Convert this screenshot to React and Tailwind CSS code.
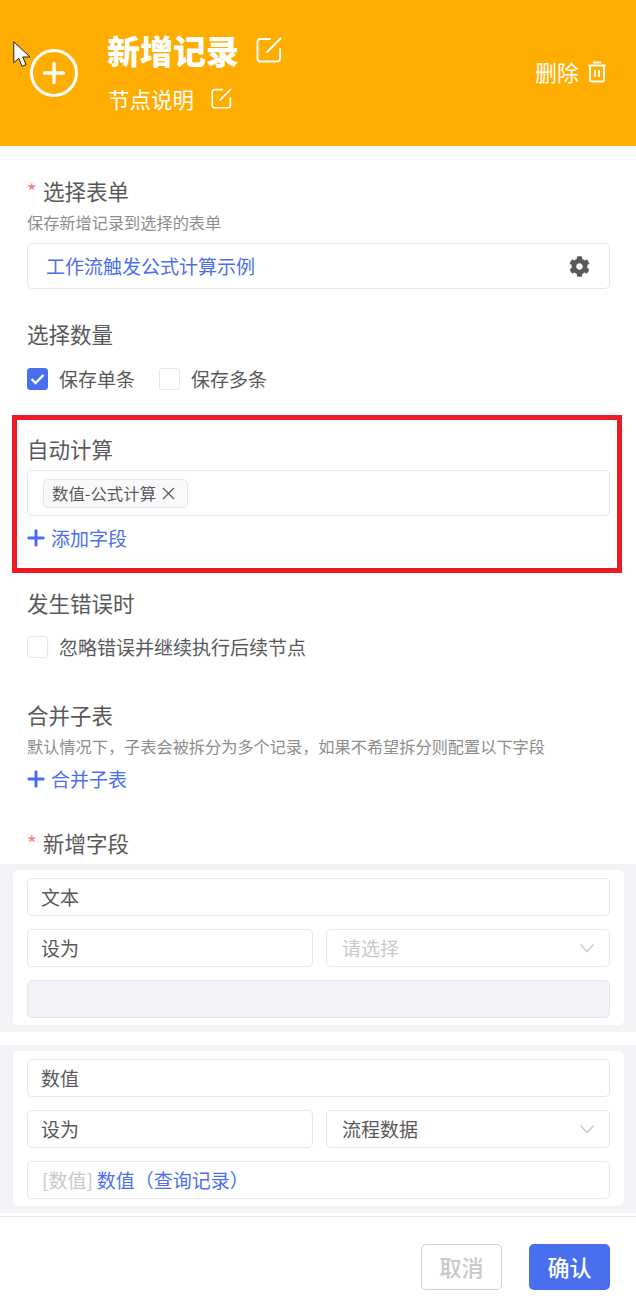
import { FaCog } from "react-icons/fa";

const cjk = { fontFamily: '"Noto Sans CJK SC", "Liberation Sans", sans-serif' };

function EditIcon({ size }) {
  return (
    <svg width={size} height={size} viewBox="0 0 26 26" fill="none" stroke="#fff" strokeWidth="2" strokeLinecap="round">
      <path d="M14 2H4.500A3 3 0 0 0 1.500 5v16.500a3 3 0 0 0 3 3H21a3 3 0 0 0 3-3V12" />
      <path d="M11 15 24.500 1.500" />
    </svg>
  );
}

function PlusIcon() {
  return (
    <svg width="18" height="18" viewBox="0 0 18 18" fill="#4a6fee">
      <rect x="0.500" y="7.500" width="17" height="3" rx="1" />
      <rect x="7.500" y="0.500" width="3" height="17" rx="1" />
    </svg>
  );
}

function Check({ on }) {
  return (
    <span className={`flex h-[22px] w-[21px] shrink-0 items-center justify-center rounded-[3px] border ${on ? "border-[#4a6fee] bg-[#4a6fee]" : "border-[#e4e6ec] bg-white"}`}>
      {on && (
        <svg width="15" height="12" viewBox="0 0 15 12" fill="none" stroke="#fff" strokeWidth="2.400">
          <path d="M1.500 6 5.500 10 13.500 2" />
        </svg>
      )}
    </span>
  );
}

function Chevron() {
  return (
    <svg width="16" height="10" viewBox="0 0 16 10" fill="none" stroke="#c4c6cc" strokeWidth="1.200">
      <path d="M1.500 1.500 8 8.500l6.500-7" />
    </svg>
  );
}

function Box({ className = "", children }) {
  return (
    <div className={`flex h-[38px] items-center rounded-[5px] border border-[#e4e6ec] text-[19px] text-[#595959] ${className}`}>
      {children}
    </div>
  );
}

function FieldCard({ name, select, placeholder, children, disabled }) {
  return (
    <div className="bg-[#f2f3f7] pt-[6px] pr-[12px] pb-[7px] pl-[13px]">
      <div className="flex flex-col gap-[13px] rounded-[5px] bg-white px-[14px] pt-[8px] pb-[7px]">
        <Box className="px-[13px]">{name}</Box>
        <div className="flex gap-[13px]">
          <Box className="w-[286px] px-[13px]">设为</Box>
          <Box className="flex-1 justify-between pr-[14px] pl-[15px]">
            <span className={placeholder ? "text-[#c8c8c8]" : ""}>{select}</span>
            <Chevron />
          </Box>
        </div>
        <Box className={disabled ? "bg-[#f2f3f7]" : "px-[14px]"}>{children}</Box>
      </div>
    </div>
  );
}

export default function App() {
  return (
    <div className="relative flex h-[1316px] w-[636px] flex-col overflow-hidden bg-white" style={cjk}>
      {/* Header */}
      <div className="flex h-[146px] shrink-0 items-center bg-[#ffad00] pr-[30px] pl-[30px] text-white">
        <svg width="48" height="48" viewBox="0 0 48 48" fill="none" stroke="#fff" className="shrink-0">
          <circle cx="24" cy="24" r="22.500" strokeWidth="3" />
          <path d="M14.500 24h19M24 14.500v19" strokeWidth="3.400" strokeLinecap="round" />
        </svg>
        <div className="mb-[7px] ml-[29px] flex flex-1 flex-col">
          <div className="flex h-[48px] items-center gap-[17px]">
            <span className="text-[33px] leading-[48px] font-black">新增记录</span>
            <EditIcon size={26} />
          </div>
          <div className="mt-[10px] flex h-[30px] items-center gap-[17px]">
            <span className="pl-px text-[21.500px] leading-[30px]">节点说明</span>
            <EditIcon size={21} />
          </div>
        </div>
        <div className="mb-[3px] flex items-center gap-[9px] text-[22px]">
          <span>删除</span>
          <svg width="18" height="22" viewBox="0 0 18 22" fill="none" stroke="#fff" strokeWidth="1.800">
            <path d="M5 1.500h8M.5 4.500h17" />
            <path d="M2 4.500v14.500a1.500 1.500 0 0 0 1.500 1.500h11a1.500 1.500 0 0 0 1.500-1.500V4.500" />
            <path d="M7 9v7M11 9v7" />
          </svg>
        </div>
      </div>

      {/* Form */}
      <div className="flex-1 text-[#595959]">
        <div className="pt-[30px] pr-[26px] pl-[27px]">
          <div className="flex h-[30px] items-center text-[21.500px] leading-[30px]">
            <span className="mr-[6px] w-[10px] text-[21px] text-[#ff7875]">*</span>选择表单
          </div>
          <p className="mt-[6px] text-[16.200px] leading-[20px] text-[#8c8c8c]">保存新增记录到选择的表单</p>
          <div className="mt-[11px] flex h-[46px] items-center justify-between rounded-[5px] border border-[#e4e6ec] pr-[19px] pl-[18px] text-[19px] text-[#4a6fee]">
            工作流触发公式计算示例
            <FaCog className="text-[#595959]" size={21} />
          </div>
          <div className="mt-[30px] text-[21.500px] leading-[30px]">选择数量</div>
          <div className="mt-[19px] flex items-center text-[19px] leading-[22px]">
            <Check on />
            <span className="ml-[11px]">保存单条</span>
            <span className="ml-[24px]"><Check /></span>
            <span className="ml-[11px]">保存多条</span>
          </div>
        </div>

        {/* Highlighted section */}
        <div className="mt-[25px] mr-[14px] ml-[12px] h-[158px] border-[5px] border-[#ed1c24] pt-[14px] pr-[7px] pl-[10px]">
          <div className="text-[21.500px] leading-[30px]">自动计算</div>
          <div className="mt-[6px] flex h-[46px] items-center rounded-[5px] border border-[#e4e6ec] pl-[15px]">
            <span className="flex h-[29px] w-[145px] items-center gap-[6px] rounded-[5px] border border-[#e4e6ec] bg-[#f9f9fb] pl-[8px] text-[16.400px]">
              数值-公式计算
              <svg width="13" height="13" viewBox="0 0 13 13" stroke="#595959" strokeWidth="1.200">
                <path d="M1 1 12 12M12 1 1 12" />
              </svg>
            </span>
          </div>
          <div className="mt-[9px] flex items-center gap-[6px] text-[19px] leading-[26px] text-[#4a6fee]">
            <PlusIcon />添加字段
          </div>
        </div>

        <div className="pr-[26px] pl-[27px]">
          <div className="mt-[15px] text-[21.500px] leading-[30px]">发生错误时</div>
          <div className="mt-[18px] flex items-center text-[19px] leading-[22px]">
            <Check />
            <span className="ml-[11px]">忽略错误并继续执行后续节点</span>
          </div>
          <div className="mt-[42px] text-[21.500px] leading-[30px]">合并子表</div>
          <p className="mt-[6px] text-[16.200px] leading-[20px] text-[#8c8c8c]">默认情况下，子表会被拆分为多个记录，如果不希望拆分则配置以下字段</p>
          <div className="mt-[10px] flex items-center gap-[6px] text-[19px] leading-[26px] text-[#4a6fee]">
            <PlusIcon />合并子表
          </div>
          <div className="mt-[36px] flex h-[30px] items-center text-[21.500px] leading-[30px]">
            <span className="mr-[6px] w-[10px] text-[21px] text-[#ff7875]">*</span>新增字段
          </div>
        </div>

        <div className="mt-[6px] flex flex-col gap-[13px]">
          <FieldCard name="文本" select="请选择" placeholder disabled />
          <FieldCard name="数值" select="流程数据">
            <span className="text-[#c8c8c8]">[数值]</span>
            <span className="ml-[4px] text-[#4a6fee]">数值（查询记录）</span>
          </FieldCard>
        </div>
      </div>

      {/* Footer */}
      <div className="flex h-[100px] shrink-0 items-center justify-end gap-[27px] border-t border-[#e4e6ec] pr-[26px]">
        <button className="h-[46px] w-[81px] rounded-[5px] border border-[#d0d0d0] text-[22px] font-medium text-[#c8c8c8]">取消</button>
        <button className="h-[46px] w-[81px] rounded-[5px] bg-[#4a6fee] text-[22px] font-medium text-white">确认</button>
      </div>

      {/* Mouse pointer captured in the screenshot */}
      <svg className="absolute top-[41px] left-[13px]" width="19" height="28" viewBox="0 0 19 28" fill="#fff" stroke="#222" strokeWidth="1">
        <path d="M.8.800v21l5-4.500 3.200 8 4-1.600-3.200-7.700H17z" />
      </svg>
    </div>
  );
}
